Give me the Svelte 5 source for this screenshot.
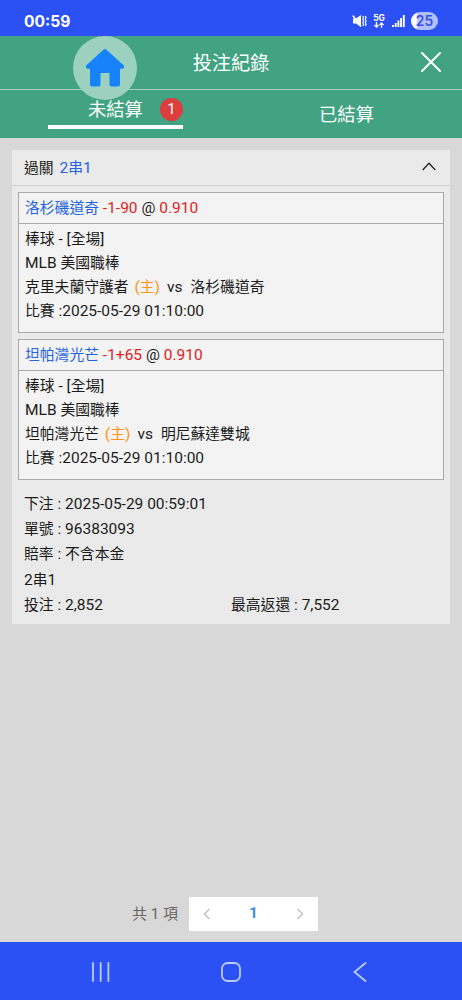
<script lang="ts">
  interface Bet {
    team: string;
    handicap: string;
    odds: string;
    home: string;
    away: string;
    time: string;
  }

  const bets: Bet[] = [
    { team: '洛杉磯道奇', handicap: '-1-90', odds: '0.910', home: '克里夫蘭守護者', away: '洛杉磯道奇', time: '2025-05-29 01:10:00' },
    { team: '坦帕灣光芒', handicap: '-1+65', odds: '0.910', home: '坦帕灣光芒', away: '明尼蘇達雙城', time: '2025-05-29 01:10:00' },
  ];

  let tab = $state('open');
  let expanded = $state(true);

  // Latin runs are set slightly larger than the Chinese around them
  const runs = (text: string) => text.split(/([\x20-\x7e]+)/).filter(Boolean);
</script>

{#snippet mixed(text: string)}{#each runs(text) as run}<span class:latin={run.charCodeAt(0) < 127}>{run}</span>{/each}{/snippet}

<div class="screen">
  <div class="status">
    <span class="clock">00:59</span>
    <div class="status-icons">
      <svg width="15" height="14" viewBox="0 0 15 14">
        <path d="M1 4.500h3L9 1v12L4 9.500H1z" fill="#fff" />
        <path d="M.8 1.500 9 12.500" stroke="#fff" stroke-width="1.400" />
        <path d="M10.700 2l1 1.600-1 1.700 1 1.700-1 1.700 1 1.700-1 1.600M13.200 2l1 1.600-1 1.700 1 1.700-1 1.700 1 1.700-1 1.600" fill="none" stroke="#fff" stroke-width="1.100" />
      </svg>
      <div class="network">
        <span>5G</span>
        <svg width="10" height="6" viewBox="0 0 10 6">
          <path d="M2.500 0v5M.5 3l2 2 2-2M7.500 6V1M5.500 3l2-2 2 2" fill="none" stroke="#fff" stroke-width="1.300" />
        </svg>
      </div>
      <svg width="13" height="12" viewBox="0 0 13 12">
        <path d="M1 10v2M3.700 8v4M6.400 5.500V12M9.100 3v9M11.800 0v12" stroke="#fff" stroke-width="1.900" />
      </svg>
      <span class="battery">25</span>
    </div>
  </div>

  <header>
    <div class="title-bar">
      <h1>投注紀錄</h1>
      <button class="close" aria-label="關閉">
        <svg width="20" height="20" viewBox="0 0 20 20">
          <path d="M1 1l18 18M19 1 1 19" stroke="#fff" stroke-width="2" stroke-linecap="round" />
        </svg>
      </button>
    </div>
    <nav>
      <button class="tab" class:active={tab === 'open'} onclick={() => (tab = 'open')}>
        <span class="label">未結算</span><span class="count">1</span>
      </button>
      <button class="tab" class:active={tab === 'settled'} onclick={() => (tab = 'settled')}>
        <span class="label">已結算</span>
      </button>
    </nav>
    <button class="home" aria-label="首頁">
      <svg width="40" height="40" viewBox="0 0 40 40">
        <path d="M18.800 1.600q1.200-1 2.400 0L38.600 17.300q1.500 2.800-1.500 3.400H35V36.500q0 2-2 2h-6.500q-2 0-2-2V25h-9v11.500q0 2-2 2H7q-2 0-2-2V20.700H2.900Q-.1 20.100 1.400 17.300z" fill="#1683fb" />
      </svg>
    </button>
  </header>

  <main>
    <article>
      <button class="card-head" onclick={() => (expanded = !expanded)}>
        <span>{@render mixed('過關 ')}<b>{@render mixed('2串1')}</b></span>
        <svg width="14" height="9" viewBox="0 0 14 9">
          <path d="M.7 8 7 1.300 13.300 8" fill="none" stroke="#222" stroke-width="1.300" />
        </svg>
      </button>
      {#if expanded}
        <div class="bets">
          {#each bets as bet}
            <section>
              <div class="pick">
                <span class="team">{bet.team}</span><span class="latin">{' '}<span class="red">{bet.handicap}</span> @ <span class="red">{bet.odds}</span></span>
              </div>
              <div class="match">
                <p>{@render mixed('棒球 - [全場]')}</p>
                <p>{@render mixed('MLB 美國職棒')}</p>
                <p>{@render mixed(bet.home + ' ')}<span class="host">{@render mixed('(主)')}</span><span class="vs latin">vs</span>{bet.away}</p>
                <p>{@render mixed('比賽 :' + bet.time)}</p>
              </div>
            </section>
          {/each}
        </div>
        <div class="summary">
          <p>{@render mixed('下注 : 2025-05-29 00:59:01')}</p>
          <p>{@render mixed('單號 : 96383093')}</p>
          <p>{@render mixed('賠率 : 不含本金')}</p>
          <p>{@render mixed('2串1')}</p>
          <div class="totals">
            <p>{@render mixed('投注 : 2,852')}</p>
            <p>{@render mixed('最高返還 : 7,552')}</p>
          </div>
        </div>
      {/if}
    </article>

    <div class="pagination">
      <span class="total">共 1 項</span>
      <div class="pager">
        <svg width="8" height="12" viewBox="0 0 8 12"><path d="M6.500 1 1.500 6l5 5" /></svg>
        <span class="latin">1</span>
        <svg width="8" height="12" viewBox="0 0 8 12"><path d="M1.500 1l5 5-5 5" /></svg>
      </div>
    </div>
  </main>

  <footer>
    <svg width="20" height="20" viewBox="0 0 20 20"><path d="M2 1v18M9.700 1v18M17.400 1v18" /></svg>
    <svg width="20" height="20" viewBox="0 0 20 20"><rect x="1" y="1" width="18" height="18" rx="5.500" /></svg>
    <svg width="20" height="20" viewBox="0 0 20 20"><path d="M15.500 1 4.500 10l11 9" /></svg>
  </footer>
</div>

<style>
  :global(body) { margin: 0; }
  .screen { display: flex; flex-direction: column; width: 462px; height: 1000px; overflow: hidden; background: #d8d8d8; color: #1b1b1b; font-family: Roboto, "Noto Sans CJK TC", sans-serif; font-size: 14.8px; }
  button { padding: 0; border: 0; background: none; color: inherit; font: inherit; cursor: pointer; }
  p, h1 { margin: 0; }
  svg { display: block; flex: none; }
  .latin { font-size: 15.5px; line-height: 1; white-space: pre; }

  .status { display: flex; justify-content: space-between; align-items: center; box-sizing: border-box; flex: none; height: 36px; padding: 6px 24px 0; background: #2b50f4; color: #fff; }
  .clock { font-family: Inter, sans-serif; font-size: 15.6px; font-weight: 700; }
  .status-icons { display: flex; align-items: center; }
  .network { display: flex; flex-direction: column; align-items: center; margin: 0 7px 0 6px; font-family: Inter, sans-serif; font-size: 8.5px; font-weight: 700; line-height: 8px; }
  .battery { width: 27px; height: 18px; margin-left: 6px; border-radius: 9px; background: linear-gradient(90deg, #fff 5px, #b4bffa 7px); color: #3150e6; font: 600 13.8px/18px Inter, sans-serif; text-align: center; }

  header { position: relative; flex: none; height: 102px; background: #41a382; color: #fff; }
  .title-bar { display: grid; grid-template-columns: 60px 1fr 60px; align-items: center; box-sizing: border-box; height: 54px; padding-bottom: 2px; border-bottom: 1px solid #a5d2c2; }
  h1 { grid-column: 2; font-size: 19.2px; font-weight: 400; text-align: center; }
  .close { display: grid; place-items: center; padding-right: 3px; }
  nav { display: grid; grid-template-columns: 1fr 1fr; height: 48px; font-size: 18.3px; }
  .tab { display: flex; justify-content: center; align-items: center; padding-bottom: 3px; }
  .tab.active { justify-content: flex-start; box-sizing: border-box; height: 39px; width: 135px; margin-left: 48px; padding: 0 0 0 40px; border-bottom: 4px solid #fff; }
  .count { width: 23px; height: 23px; margin: 3px 0 0 17px; border-radius: 50%; background: #dc3d3d; font-size: 15px; line-height: 22px; text-align: center; }
  .label { position: relative; z-index: 2; }
  .home { position: absolute; left: 73px; top: 0; z-index: 1; display: grid; place-items: center; width: 64px; height: 64px; border-radius: 50%; background: #9cd0bf; }

  main { display: flex; flex-direction: column; flex: 1; min-height: 0; padding: 12px 12px 11px; }
  article { background: #eaeaea; }
  .card-head { display: flex; justify-content: space-between; align-items: center; box-sizing: border-box; width: 100%; height: 36px; padding: 0 14px 3px 12px; border-bottom: 1px solid #cfcfcf; }
  .card-head b { margin-left: 2px; color: #2463e0; font-weight: 400; }
  .bets { display: flex; flex-direction: column; gap: 6px; padding: 6px 6px 0; }
  section { box-sizing: border-box; height: 141px; border: 1px solid #aaa; background: #f3f3f3; }
  .pick { box-sizing: border-box; height: 31px; padding-left: 6px; border-bottom: 1px solid #aaa; line-height: 30px; }
  .team { color: #2463e0; }
  .red { color: #e01b22; }
  .host { margin-left: 2px; color: #ff9318; }
  .match { padding: 3px 6px 0; line-height: 24px; }
  .vs { margin: 0 8px 0 7px; }
  .summary { padding: 12px 12px 6px; line-height: 25.2px; }
  .totals { display: grid; grid-template-columns: 1fr 1fr; }

  .pagination { display: flex; justify-content: center; align-items: center; margin-top: auto; margin-right: 12px; }
  .total { margin: 0 11px 3px 0; color: #666; font-size: 15px; }
  .pager { display: flex; justify-content: space-between; align-items: center; box-sizing: border-box; width: 129px; height: 34px; padding: 0 14px; background: #fff; color: #3d8fe0; font-weight: 700; }
  .pager path { fill: none; stroke: #c2c4ca; stroke-width: 1.5; }

  footer { display: flex; justify-content: space-between; align-items: center; box-sizing: border-box; flex: none; height: 58px; padding: 1px 92px 0 91px; background: #2b50f4; }
  footer svg { fill: none; stroke: #b9cbff; stroke-width: 1.8; stroke-linecap: round; }
</style>
